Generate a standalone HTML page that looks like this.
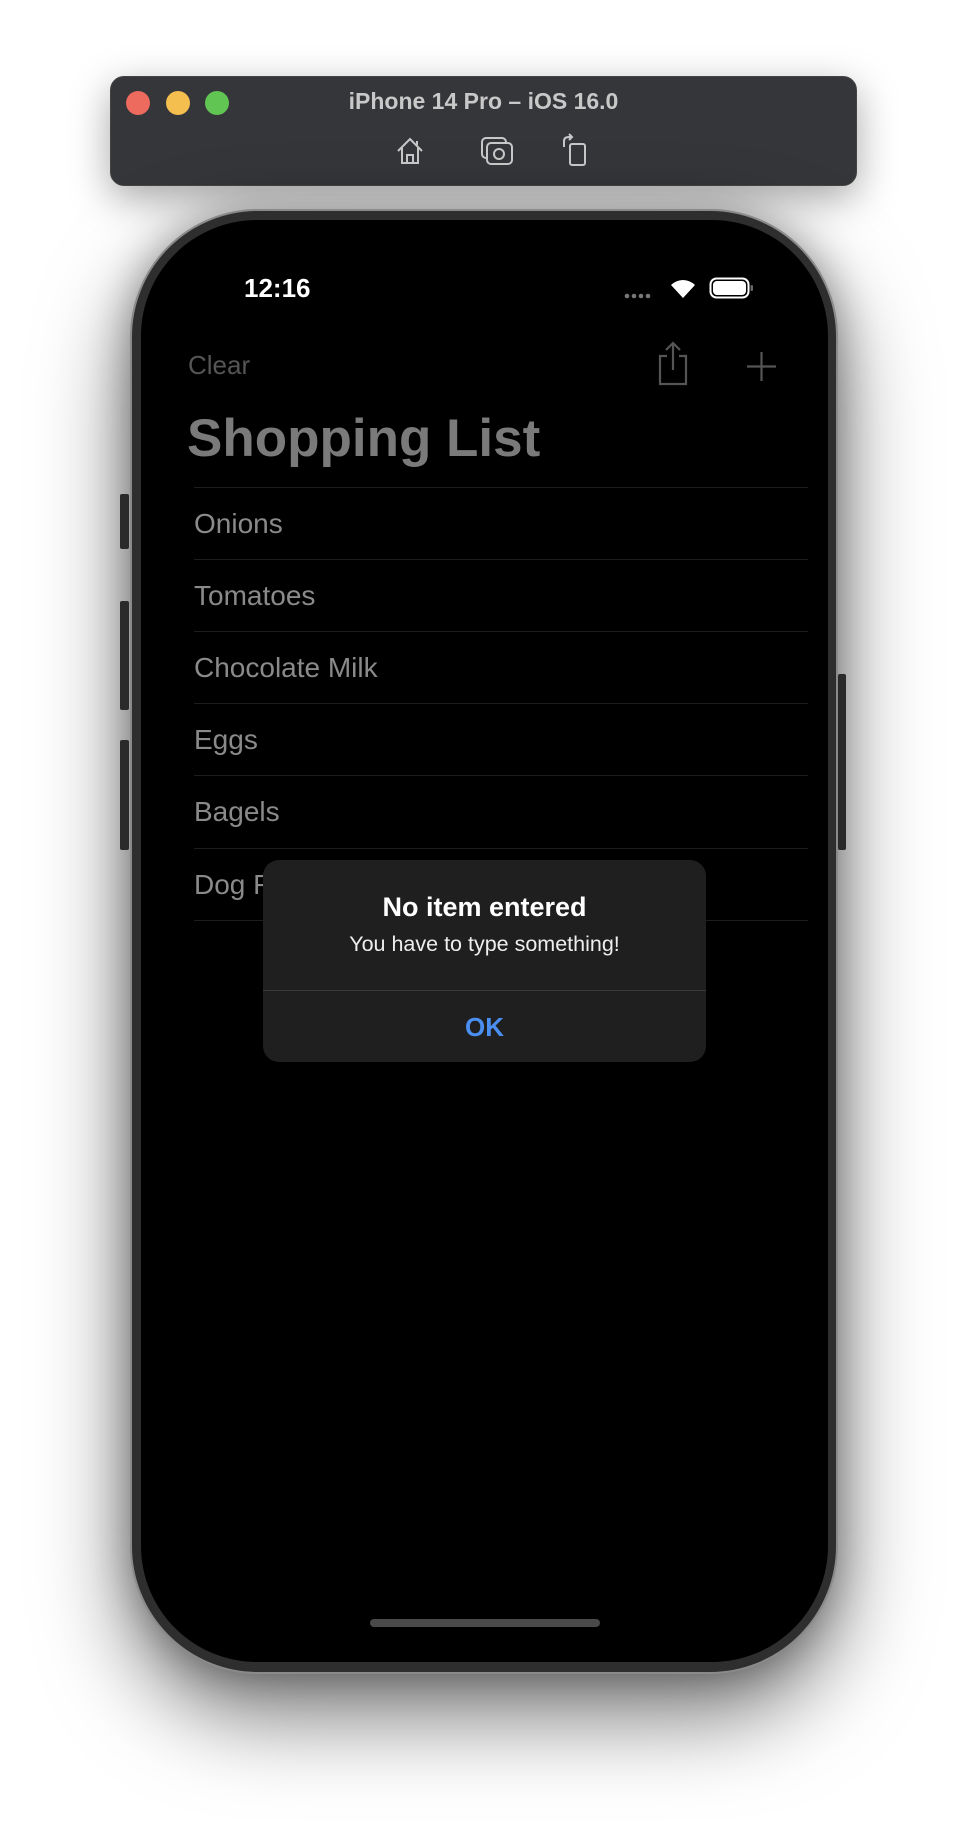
<!DOCTYPE html>
<html><head><meta charset="utf-8"><style>
*{margin:0;padding:0;box-sizing:border-box}
body{width:974px;height:1836px;background:#fff;position:relative;overflow:hidden;font-family:"Liberation Sans",sans-serif}
.abs{position:absolute}
.tb{left:110px;top:76px;width:747px;height:110px;background:#35363a;border-radius:14px;box-shadow:0 12px 40px rgba(0,0,0,.35);border:1px solid #444}
.dot{width:24px;height:24px;border-radius:50%;top:91px}
.phone{left:130px;top:209px;width:708px;height:1465px;border-radius:128px;background:#2e2e2e;border:2px solid #8a8a8a;box-shadow:0 40px 90px rgba(0,0,0,.55),0 0 40px rgba(0,0,0,.3)}
.screen{left:141px;top:220px;width:687px;height:1442px;border-radius:116px;background:#000;overflow:hidden}
.btn{background:#2a2a2a;border-radius:2px}
.sep{left:194px;width:614px;height:1px;background:#1c1c1c}
.item{left:194px;font-size:28px;color:#8a8a8a;line-height:32px}
</style></head><body>
<div class="abs tb"></div>
<div class="abs dot" style="left:126px;background:#ec6a5e"></div>
<div class="abs dot" style="left:166px;background:#f4bf4f"></div>
<div class="abs dot" style="left:205px;background:#61c554"></div>
<div class="abs" style="left:110px;width:747px;top:88px;text-align:center;color:#c8c8c8;font-weight:bold;font-size:23px">iPhone 14 Pro – iOS 16.0</div>
<svg class="abs" style="left:394px;top:135px" width="32" height="32" viewBox="0 0 32 32" fill="none" stroke="#c8c8c8" stroke-width="2"><path d="M4 16 L16 4 L28 16 M8 13 V28 H24 V13 M13 28 V20 H19 V28"/><path d="M23 6 V10"/></svg>
<svg class="abs" style="left:480px;top:135px" width="34" height="32" viewBox="0 0 34 32" fill="none" stroke="#c8c8c8" stroke-width="2"><rect x="2" y="3" width="24" height="20" rx="4"/><rect x="7" y="8" width="25" height="21" rx="4" fill="#35363a"/><circle cx="19" cy="19" r="5"/></svg>
<svg class="abs" style="left:560px;top:133px" width="30" height="34" viewBox="0 0 30 34" fill="none" stroke="#c8c8c8" stroke-width="2"><rect x="10" y="11" width="15" height="21" rx="2"/><path d="M4 14 V8 Q4 4 9 4 H12 M9 1 L12 4 L9 7"/></svg>

<div class="abs phone"></div>
<div class="abs btn" style="left:120px;top:494px;width:9px;height:55px"></div>
<div class="abs btn" style="left:120px;top:601px;width:9px;height:109px"></div>
<div class="abs btn" style="left:120px;top:740px;width:9px;height:110px"></div>
<div class="abs btn" style="left:838px;top:674px;width:8px;height:176px"></div>
<div class="abs screen">
</div>
<div class="abs" style="left:244px;top:273px;color:#fff;font-weight:bold;font-size:26px">12:16</div>
<svg class="abs" style="left:624px;top:293px" width="30" height="6"><circle cx="3" cy="3" r="2.3" fill="#777"/><circle cx="10" cy="3" r="2.3" fill="#777"/><circle cx="17" cy="3" r="2.3" fill="#777"/><circle cx="24" cy="3" r="2.3" fill="#777"/></svg>
<svg class="abs" style="left:670px;top:277px" width="26" height="22" viewBox="0 0 26 22"><path d="M13 21 L1 8 A17 17 0 0 1 25 8 Z" fill="#fff"/></svg>
<svg class="abs" style="left:709px;top:277px" width="46" height="22" viewBox="0 0 46 22"><rect x="1.5" y="1.5" width="38" height="19" rx="6" fill="none" stroke="#fff" stroke-width="2"/><rect x="4" y="4" width="33" height="14" rx="4" fill="#fff"/><rect x="41.5" y="8" width="2.5" height="6" rx="1" fill="#666"/></svg>

<div class="abs" style="left:188px;top:350px;color:#555;font-size:26px">Clear</div>
<svg class="abs" style="left:656px;top:340px" width="34" height="46" viewBox="0 0 34 46" fill="none" stroke="#555" stroke-width="2.2"><path d="M11 16 H4 V44 H30 V16 H23 M17 30 V3 M10 10 L17 3 L24 10"/></svg>
<svg class="abs" style="left:746px;top:351px" width="31" height="31" viewBox="0 0 31 31" stroke="#555" stroke-width="2.2"><path d="M15.5 1 V30 M1 15.5 H30"/></svg>
<div class="abs" style="left:187px;top:408px;color:#7a7a7a;font-weight:bold;font-size:53px;line-height:62px">Shopping List</div>

<div class="abs sep" style="top:487px"></div>
<div class="abs item" style="top:508px">Onions</div>
<div class="abs sep" style="top:559px"></div>
<div class="abs item" style="top:580px">Tomatoes</div>
<div class="abs sep" style="top:631px"></div>
<div class="abs item" style="top:652px">Chocolate Milk</div>
<div class="abs sep" style="top:703px"></div>
<div class="abs item" style="top:724px">Eggs</div>
<div class="abs sep" style="top:775px"></div>
<div class="abs item" style="top:796px">Bagels</div>
<div class="abs sep" style="top:848px"></div>
<div class="abs item" style="top:869px">Dog Food</div>
<div class="abs sep" style="top:920px"></div>

<div class="abs" style="left:263px;top:860px;width:443px;height:202px;background:#1f1f1f;border-radius:16px;overflow:hidden">
  <div class="abs" style="left:0;width:443px;top:32px;text-align:center;color:#fff;font-weight:bold;font-size:27px">No item entered</div>
  <div class="abs" style="left:0;width:443px;top:72px;text-align:center;color:#eee;font-size:21.5px">You have to type something!</div>
  <div class="abs" style="left:0;top:130px;width:443px;height:1px;background:#3a3a3a"></div>
  <div class="abs" style="left:0;width:443px;top:152px;text-align:center;color:#4a8ef0;font-weight:bold;font-size:26px">OK</div>
</div>
<div class="abs" style="left:370px;top:1619px;width:230px;height:8px;border-radius:4px;background:#4a4a4a"></div>
</body></html>
